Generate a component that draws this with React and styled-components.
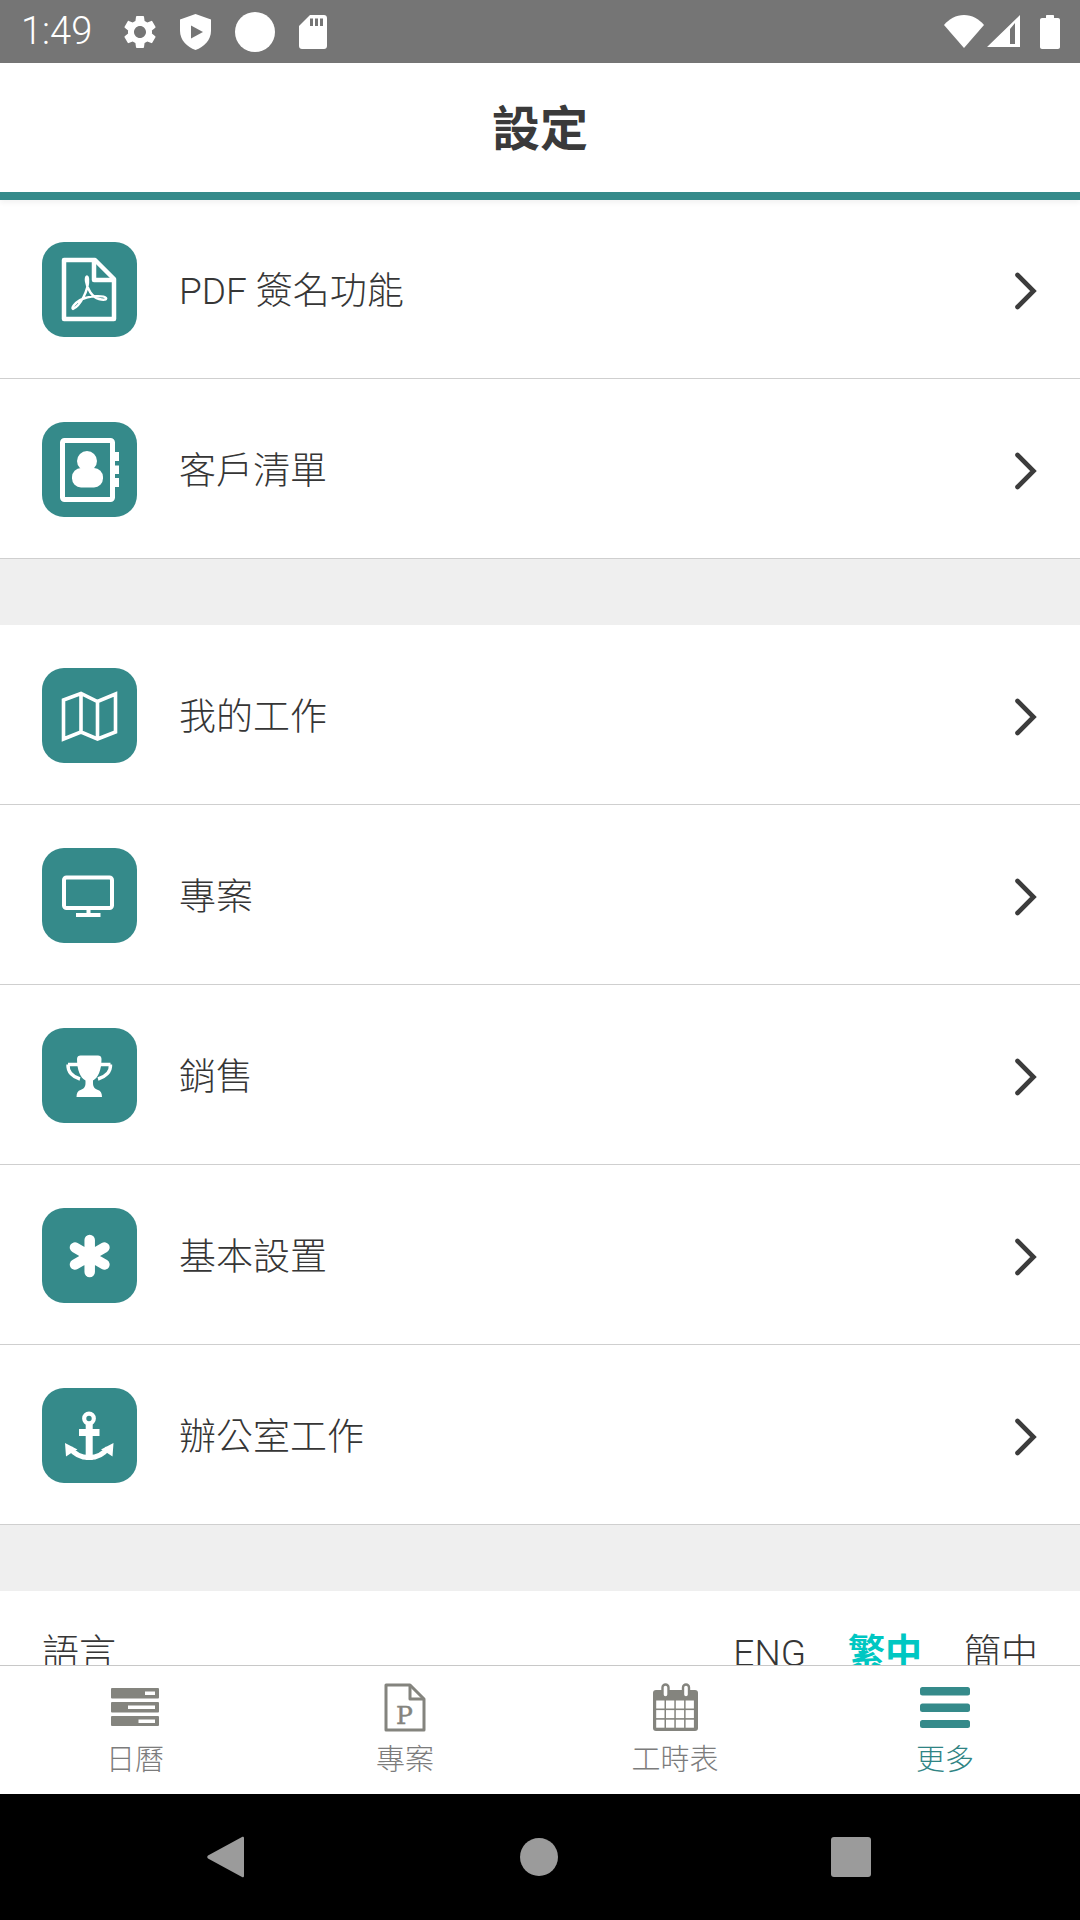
import React from "react";
import styled, { createGlobalStyle } from "styled-components";
import { MdSettings } from "react-icons/md";

const Global = createGlobalStyle`
  html, body { margin: 0; padding: 0; background: #fff; }
  * { box-sizing: border-box; }
  body { font-family: Roboto, "Noto Sans CJK TC", sans-serif; }
`;

const teal = "#358a8a";
const grey = "#84847e";

const Screen = styled.div`
  width: 1080px;
  height: 1920px;
  display: flex;
  flex-direction: column;
  overflow: hidden;
  background: #fff;
`;

const StatusBar = styled.div`
  height: 63px;
  flex: none;
  background: #757575;
  color: #fff;
  display: flex;
  align-items: center;
  justify-content: space-between;
  padding: 0 20px 0 21px;
`;
const StatusGroup = styled.div`
  display: flex;
  align-items: center;
  gap: ${(p) => p.$gap}px;
`;
const Time = styled.span`
  font-size: 38px;
  font-weight: 300;
  line-height: 63px;
  margin-right: 8px;
`;

const Header = styled.header`
  height: 137px;
  flex: none;
  display: flex;
  align-items: center;
  justify-content: center;
  border-bottom: 8px solid ${teal};
  box-shadow: 0 3px 5px rgba(0, 0, 0, 0.05);
  position: relative;
  z-index: 1;
`;
const Title = styled.h1`
  margin: 0 0 5px;
  font-size: 48px;
  font-weight: 700;
  color: #3a3a3a;
`;

const Content = styled.main`
  flex: 1;
  min-height: 0;
  margin-top: -1px;
  overflow: hidden;
  background: #efefef;
`;
const Group = styled.section`
  background: #fff;
  margin-bottom: 66px;
`;
const Row = styled.div`
  height: 180px;
  display: flex;
  align-items: center;
  padding: 1px 42px 0 42px;
  border-bottom: 1.5px solid #cfcfcf;
`;
const IconBox = styled.div`
  width: 95px;
  height: 95px;
  flex: none;
  border-radius: 22px;
  background: ${teal};
  svg { display: block; }
`;
const RowLabel = styled.span`
  flex: 1;
  margin: 0 0 2px 42px;
  font-size: 37px;
  font-weight: 300;
  color: #363636;
`;
const ChevronBox = styled.span`
  display: flex;
  flex: none;
  margin-top: 4px;
`;
const Language = styled.section`
  background: #fff;
  padding: 38px 42px 40px 42px;
  display: flex;
  justify-content: space-between;
  font-size: 37px;
  font-weight: 300;
  line-height: 50px;
  color: #363636;
  height: 200px;
`;
const LangOptions = styled.div`
  display: flex;
  gap: 42px;
`;
const LangOption = styled.span`
  color: ${(p) => (p.$active ? "#00c7c2" : "#363636")};
  font-weight: ${(p) => (p.$active ? 700 : 300)};
`;

const TabBar = styled.nav`
  height: 129px;
  flex: none;
  display: grid;
  grid-template-columns: repeat(4, 1fr);
  background: #fff;
  border-top: 1px solid #c8c8c8;
`;
const Tab = styled.div`
  display: flex;
  flex-direction: column;
  align-items: center;
  padding-top: 17px;
  color: ${(p) => (p.$active ? "#2f8484" : "#7c7c7c")};
`;
const TabIcon = styled.div`
  height: 48px;
  display: flex;
  align-items: center;
`;
const TabLabel = styled.span`
  margin-top: 14px;
  font-size: 29px;
  font-weight: 300;
  line-height: 30px;
`;

const NavBar = styled.div`
  height: 126px;
  flex: none;
  background: #000;
  display: grid;
  grid-template-columns: 313px 311px 40px;
  align-items: center;
  padding-left: 207px;
`;

const W = "#fff";

const Svg95 = ({ children }) => (
  <svg width="95" height="95" viewBox="0 0 95 95">{children}</svg>
);

const PdfIcon = () => (
  <Svg95>
    <path d="M22 18 H53 L72 37 V77 H22 Z" fill="none" stroke={W} strokeWidth="4.5" strokeLinejoin="round" />
    <path d="M52 18 V38 H72" fill="none" stroke={W} strokeWidth="4.5" strokeLinejoin="round" />
    <path d="M31 67 C38 64 47 48 46 37 C45.5 33 43.5 34 44 39 C45 47 50 55 57 57 C62 58.5 65 57.5 64 56 C62 53.5 48 53 38 58 C33 61 29 66 31 67 Z" fill="none" stroke={W} strokeWidth="2.4" strokeLinejoin="round" />
  </Svg95>
);
const ContactIcon = () => (
  <Svg95>
    <rect x="20.5" y="18.5" width="50" height="59" rx="2" fill="none" stroke={W} strokeWidth="5" />
    <rect x="72" y="30" width="5" height="9" fill={W} />
    <rect x="72" y="43.5" width="5" height="8.5" fill={W} />
    <rect x="72" y="56" width="5" height="9" fill={W} />
    <circle cx="45" cy="39" r="10" fill={W} />
    <rect x="30" y="46" width="31" height="19.5" rx="9" fill={W} />
  </Svg95>
);
const MapIcon = () => (
  <Svg95>
    <path d="M21.5 32 L39 25.5 L55.5 33.5 L73.5 26 V64 L55.5 71 L39 64 L21.5 71 Z M39 25.5 V64 M55.5 33.5 V71" fill="none" stroke={W} strokeWidth="3.6" strokeLinejoin="miter" />
  </Svg95>
);
const MonitorIcon = () => (
  <Svg95>
    <rect x="22" y="29.5" width="48" height="30.5" rx="2.5" fill="none" stroke={W} strokeWidth="4" />
    <rect x="44.5" y="61" width="4" height="5" fill={W} />
    <rect x="34" y="65" width="24.5" height="4" fill={W} />
  </Svg95>
);
const TrophyIcon = () => (
  <Svg95>
    <path d="M26 36.5 H36 M68.5 36.5 H58 M26 36.5 C25.5 44 31 49 38 51 M68.5 36.5 C69 44 63 49 56 51" fill="none" stroke={W} strokeWidth="3.4" />
    <path d="M35 31 C35 28.5 36.5 27.5 38.5 27.5 H56 C58 27.5 59.5 28.5 59.5 31 C59.5 42 56 50 51 52.5 V55 C51 59 53 61 56 62 C58.5 62.8 60 65 60 69 H34.5 C34.5 65 36 62.8 38.5 62 C41.5 61 43.5 59 43.5 55 V52.5 C38.5 50 35 42 35 31 Z" fill={W} />
  </Svg95>
);
const AsteriskIcon = () => (
  <Svg95>
    <path d="M47.7 32 V64 M33 39.5 L62.4 56.5 M33 56.5 L62.4 39.5" fill="none" stroke={W} strokeWidth="10.5" strokeLinecap="round" />
  </Svg95>
);
const AnchorIcon = () => (
  <Svg95>
    <circle cx="47" cy="30.5" r="4.8" fill="none" stroke={W} strokeWidth="4.2" />
    <rect x="37" y="41" width="20.5" height="7" fill={W} />
    <rect x="43.7" y="36" width="7" height="36" fill={W} />
    <path d="M28 60 C33 67 40 69.5 47 69.5 C54 69.5 61 67 66 60" fill="none" stroke={W} strokeWidth="5" />
    <path d="M23 55 L35.5 61.5 L31.5 63.5 L24 68.5 Z M71.5 55 L59 61.5 L63 63.5 L70.5 68.5 Z" fill={W} />
  </Svg95>
);

const Chevron = () => (
  <ChevronBox>
    <svg width="24" height="38" viewBox="0 0 24 38">
      <path d="M3.5 3 L19.5 19 L3.5 35" fill="none" stroke="#3c3c3c" strokeWidth="4.6" strokeLinecap="round" strokeLinejoin="miter" />
    </svg>
  </ChevronBox>
);

const items1 = [
  [PdfIcon, "PDF 簽名功能"],
  [ContactIcon, "客戶清單"],
];
const items2 = [
  [MapIcon, "我的工作"],
  [MonitorIcon, "專案"],
  [TrophyIcon, "銷售"],
  [AsteriskIcon, "基本設置"],
  [AnchorIcon, "辦公室工作"],
];

const MenuRow = ({ icon: Icon, label }) => (
  <Row>
    <IconBox><Icon /></IconBox>
    <RowLabel>{label}</RowLabel>
    <Chevron />
  </Row>
);

const ListIcon = () => (
  <svg width="48" height="38" viewBox="0 0 48 38">
    <rect y="0" width="48" height="10.5" rx="1" fill={grey} />
    <rect y="14" width="48" height="10.5" rx="1" fill={grey} />
    <rect y="28" width="48" height="10" rx="1" fill={grey} />
    <rect x="34" y="3.5" width="10" height="3.5" fill="#fff" />
    <rect x="17" y="17.5" width="27" height="3.5" fill="#fff" />
    <rect x="27.5" y="31.5" width="16.5" height="3.5" fill="#fff" />
  </svg>
);
const ProjectIcon = () => (
  <svg width="42" height="49" viewBox="0 0 42 49">
    <path d="M2 2 H26 L40 16 V47 H2 Z" fill="none" stroke={grey} strokeWidth="3" strokeLinejoin="round" />
    <path d="M26 2 V16 H40" fill="none" stroke={grey} strokeWidth="3" strokeLinejoin="round" />
    <text x="20.5" y="41" textAnchor="middle" fontFamily="'DejaVu Serif', serif" fontWeight="400" fontSize="25" fill={grey} stroke={grey} strokeWidth="0.5">P</text>
  </svg>
);
const CalendarIcon = () => (
  <svg width="45" height="48" viewBox="0 0 45 48">
    <rect x="0" y="7" width="45" height="41" rx="3" fill={grey} />
    <rect x="9.5" y="1.5" width="6" height="13" rx="3" fill="#fff" stroke={grey} strokeWidth="2.4" />
    <rect x="30" y="1.5" width="6" height="13" rx="3" fill="#fff" stroke={grey} strokeWidth="2.4" />
    {[0, 1, 2].map((r) =>
      [0, 1, 2, 3].map((c) => (
        <rect key={`${r}-${c}`} x={3.2 + c * 9.8} y={17.5 + r * 9.6} width="8.3" height="8" fill="#fff" />
      ))
    )}
  </svg>
);
const MenuIcon = () => (
  <svg width="50" height="41" viewBox="0 0 50 41">
    <rect y="0" width="50" height="8.5" rx="2.5" fill={teal} />
    <rect y="16.5" width="50" height="8.5" rx="2.5" fill={teal} />
    <rect y="33" width="50" height="8" rx="2.5" fill={teal} />
  </svg>
);

export default function App() {
  return (
    <Screen>
      <Global />
      <StatusBar>
        <StatusGroup $gap={24}>
          <Time>1:49</Time>
          <MdSettings size={40} color={W} style={{ margin: "0 -4px" }} />
          <svg width="31" height="36" viewBox="0 0 31 36">
            <path d="M15.5 0 L31 5.5 V17 C31 26 24 33 15.5 36 C7 33 0 26 0 17 V5.5 Z" fill={W} />
            <path d="M11 11.5 L23 18 L11 24.5 Z" fill="#757575" />
          </svg>
          <svg width="40" height="40" viewBox="0 0 40 40"><circle cx="20" cy="20" r="20" fill={W} /></svg>
          <svg width="28" height="34" viewBox="0 0 28 34">
            <path d="M11 0 H25 C26.7 0 28 1.3 28 3 V31 C28 32.7 26.7 34 25 34 H3 C1.3 34 0 32.7 0 31 V11 Z" fill={W} />
            <rect x="11" y="3.5" width="3" height="7.5" fill="#757575" />
            <rect x="16" y="3.5" width="3" height="7.5" fill="#757575" />
            <rect x="21" y="3.5" width="3" height="7.5" fill="#757575" />
          </svg>
        </StatusGroup>
        <StatusGroup $gap={3}>
          <svg width="40" height="33" viewBox="0 0 40 33">
            <path d="M20 33 L0 10 C5 4 12 0 20 0 C28 0 35 4 40 10 Z" fill={W} />
          </svg>
          <svg width="34" height="33" viewBox="0 0 34 33">
            <path fillRule="evenodd" d="M33 0 V32 H0 Z M28 8 L23 14 V29 H28 Z" fill={W} />
          </svg>
          <svg width="20" height="34" viewBox="0 0 20 34" style={{ marginLeft: 16 }}>
            <path d="M6 3 V1 C6 .4 6.4 0 7 0 H13 C13.6 0 14 .4 14 1 V3 H18 C19.1 3 20 3.9 20 5 V32 C20 33.1 19.1 34 18 34 H2 C.9 34 0 33.1 0 32 V5 C0 3.9 .9 3 2 3 Z" fill={W} />
          </svg>
        </StatusGroup>
      </StatusBar>

      <Header><Title>設定</Title></Header>

      <Content>
        <Group>
          {items1.map(([icon, label]) => <MenuRow key={label} icon={icon} label={label} />)}
        </Group>
        <Group>
          {items2.map(([icon, label]) => <MenuRow key={label} icon={icon} label={label} />)}
        </Group>
        <Language>
          <span>語言</span>
          <LangOptions>
            <LangOption>ENG</LangOption>
            <LangOption $active>繁中</LangOption>
            <LangOption>簡中</LangOption>
          </LangOptions>
        </Language>
      </Content>

      <TabBar>
        <Tab><TabIcon><ListIcon /></TabIcon><TabLabel>日曆</TabLabel></Tab>
        <Tab><TabIcon><ProjectIcon /></TabIcon><TabLabel>專案</TabLabel></Tab>
        <Tab><TabIcon><CalendarIcon /></TabIcon><TabLabel>工時表</TabLabel></Tab>
        <Tab $active><TabIcon><MenuIcon /></TabIcon><TabLabel>更多</TabLabel></Tab>
      </TabBar>

      <NavBar>
        <svg width="37" height="42" viewBox="0 0 37 42">
          <path d="M35 1 C36 .4 37 1 37 2 V40 C37 41 36 41.6 35 41 L1 22.5 C0 21.8 0 20.2 1 19.5 Z" fill="#9b9b9b" />
        </svg>
        <svg width="38" height="38" viewBox="0 0 38 38"><circle cx="19" cy="19" r="19" fill="#9b9b9b" /></svg>
        <svg width="40" height="40" viewBox="0 0 40 40"><rect width="40" height="40" rx="3" fill="#9b9b9b" /></svg>
      </NavBar>
    </Screen>
  );
}
